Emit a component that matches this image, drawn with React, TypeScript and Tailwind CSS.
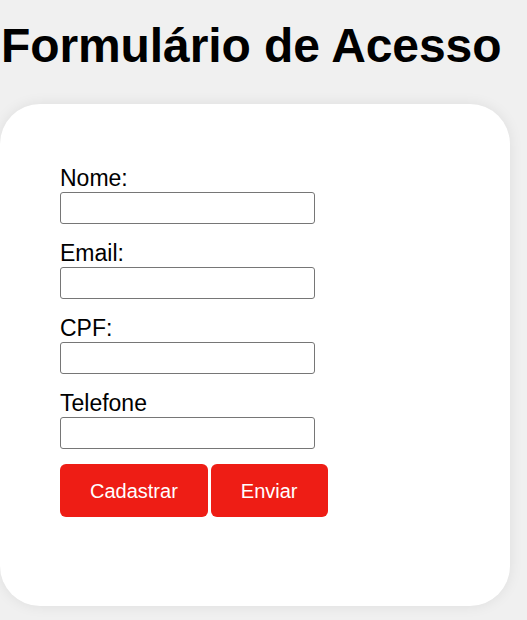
import React from "react";

export default function App() {
  const fields = ["Nome:", "Email:", "CPF:", "Telefone"];

  return (
    <div className="min-h-[620px] bg-[#f0f0f0] font-['Liberation_Sans',Arial,sans-serif] text-black">
      <h1 className="pt-[18px] pl-[1px] text-[48px] leading-[55px] font-bold tracking-[-0.1px]">
        Formulário de Acesso
      </h1>

      <div className="mt-[31px] w-[510px] h-[502px] bg-white rounded-[40px] shadow-[0_0_14px_rgba(0,0,0,0.08)] pl-[60px] pt-[61px]">
        <form className="flex flex-col" onSubmit={(e) => e.preventDefault()}>
          {fields.map((label) => (
            <div key={label} className="flex flex-col mb-[16px]">
              <label className="text-[23px] leading-[26px]">{label}</label>
              <input
                type="text"
                className="mt-[1px] w-[255px] h-[32px] border border-[#767676] rounded-[3px] bg-white"
              />
            </div>
          ))}

          <div className="flex gap-[3px] -mt-[1px]">
            <button
              type="button"
              className="h-[53px] px-[30px] rounded-[6px] bg-[#ee1d15] text-white text-[20px]"
            >
              Cadastrar
            </button>
            <button
              type="submit"
              className="h-[53px] px-[30px] rounded-[6px] bg-[#ee1d15] text-white text-[20px]"
            >
              Enviar
            </button>
          </div>
        </form>
      </div>
    </div>
  );
}
